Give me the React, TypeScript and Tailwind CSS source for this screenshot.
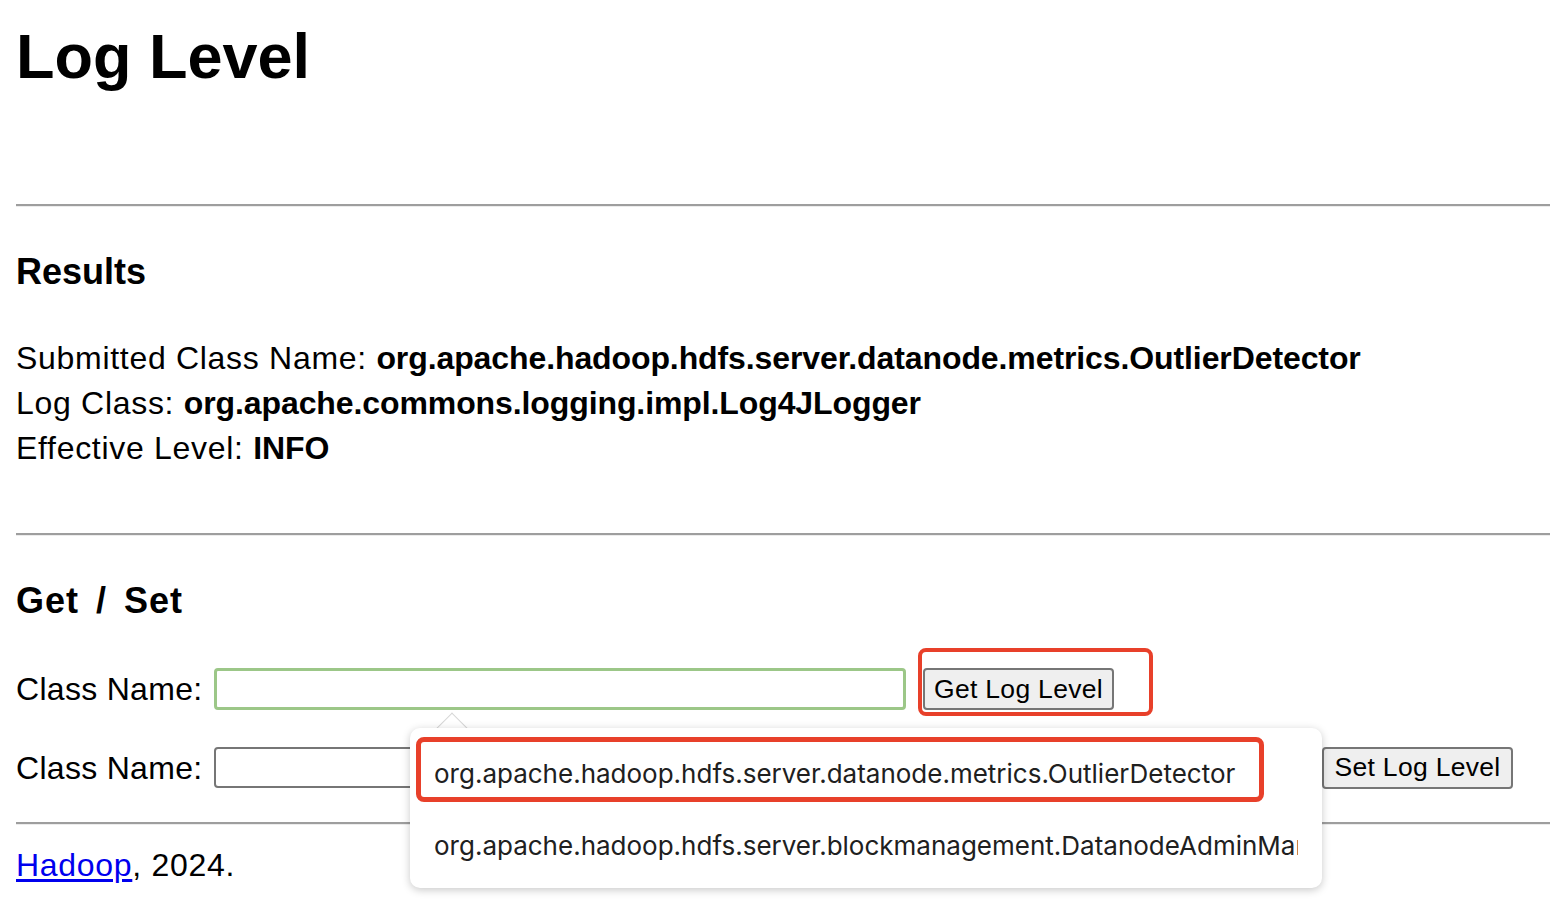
import React from 'react';

// 结果数据
const results = [
  { label: 'Submitted Class Name: ', value: 'org.apache.hadoop.hdfs.server.datanode.metrics.OutlierDetector' },
  { label: 'Log Class: ', value: 'org.apache.commons.logging.impl.Log4JLogger' },
  { label: 'Effective Level: ', value: 'INFO' },
];

const suggestions = [
  'org.apache.hadoop.hdfs.server.datanode.metrics.OutlierDetector',
  'org.apache.hadoop.hdfs.server.blockmanagement.DatanodeAdminManager',
];

const Rule: React.FC<{ className?: string }> = ({ className = '' }) => (
  <div className={`ml-4 h-0 border-t-2 border-b border-t-[#9e9e9e] border-b-[#ececec] ${className}`} />
);

const Button: React.FC<{ children: React.ReactNode }> = ({ children }) => (
  <button className="w-[191px] h-[42px] shrink-0 bg-[#efefef] border-2 border-[#767676] rounded-[4px] text-[26.5px] leading-none text-black flex items-center justify-center">
    {children}
  </button>
);

export default function App() {
  return (
    <div
      className="relative w-[1550px] h-[918px] overflow-hidden bg-white text-black"
      style={{ fontFamily: '"Liberation Sans", Arial, sans-serif' }}
    >
      <div className="pt-[20px]">
        <h1 className="ml-4 text-[63px] leading-[72px] font-bold">Log Level</h1>

        <Rule className="mt-[112px]" />

        {/* Results */}
        <h3 className="ml-4 mt-[44px] text-[36px] leading-[42px] font-bold">Results</h3>
        <div className="ml-4 mt-[43px]">
          {results.map(r => (
            <div key={r.label} className="h-[45px] leading-[45px] text-[32px] whitespace-nowrap">
              <span className="tracking-[0.7px]">{r.label}</span>
              <b className="tracking-[-0.1px]">{r.value}</b>
            </div>
          ))}
        </div>

        <Rule className="mt-[62px]" />

        {/* Get / Set */}
        <h3 className="ml-4 mt-[44px] text-[36px] leading-[42px] font-bold tracking-[1px] [word-spacing:6px]">Get / Set</h3>

        <div className="ml-4 mt-[46px] flex items-center h-[42px] text-[32px] tracking-[0.3px]">
          <span className="w-[198px] shrink-0">Class Name:</span>
          <div className="w-[692px] h-[42px] shrink-0 border-[3px] border-[#9cc788] rounded-[4px] bg-white" />
          <div className="ml-[17px]">
            <Button>Get Log Level</Button>
          </div>
        </div>

        <div className="ml-4 mt-[37px] flex items-center h-[41px] text-[32px] tracking-[0.3px]">
          <span className="w-[198px] shrink-0">Class Name:</span>
          <div className="w-[692px] h-[41px] shrink-0 border-2 border-[#767676] rounded-[4px] bg-white" />
          <span className="ml-[8px] w-[92px] shrink-0">Level:</span>
          <div className="w-[308px] h-[41px] shrink-0 border-2 border-[#767676] rounded-[4px] bg-white" />
          <div className="ml-[8px]">
            <Button>Set Log Level</Button>
          </div>
        </div>

        <Rule className="mt-[34px]" />

        <div className="ml-4 mt-[18px] h-[45px] leading-[45px] text-[32px] tracking-[0.7px]">
          <a href="#" className="text-[#0000ee] underline underline-offset-[3px]">Hadoop</a>, 2024.
        </div>
      </div>

      {/* autocomplete popup caret */}
      <div className="absolute left-[441px] top-[717px] w-[22px] h-[22px] rotate-45 bg-white border-l border-t border-[#d6d6d6]" />

      {/* autocomplete popup */}
      <div className="absolute left-[410px] top-[728px] w-[912px] h-[160px] bg-white rounded-[10px] shadow-[0_2px_8px_rgba(0,0,0,0.22)] pt-[9px] pl-[24px] pr-[24px] overflow-hidden">
        {suggestions.map(s => (
          <div
            key={s}
            className="h-[72px] flex items-center whitespace-nowrap overflow-hidden text-[26px] text-[#202020]"
            style={{ fontFamily: 'Inter, "Liberation Sans", sans-serif' }}
          >
            {s}
          </div>
        ))}
      </div>

      {/* annotations */}
      <div className="absolute left-[918px] top-[648px] w-[235px] h-[68px] border-4 border-[#e8402a] rounded-[8px]" />
      <div className="absolute left-[416px] top-[737px] w-[848px] h-[65px] border-[5px] border-[#e8402a] rounded-[8px]" />
    </div>
  );
}
